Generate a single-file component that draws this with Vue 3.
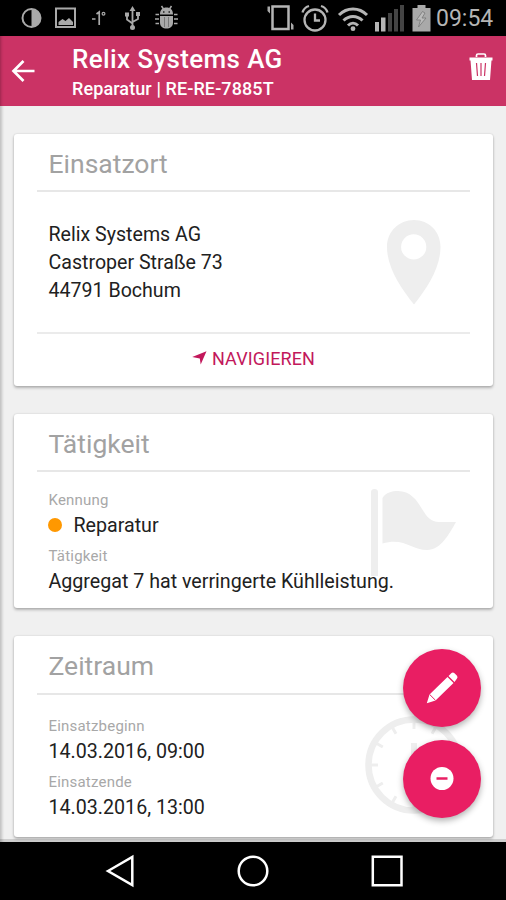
<script setup>
const address = ['Relix Systems AG', 'Castroper Straße 73', '44791 Bochum']
const period = [
  { label: 'Einsatzbeginn', value: '14.03.2016, 09:00' },
  { label: 'Einsatzende', value: '14.03.2016, 13:00' }
]
const ticks = Array.from({ length: 12 }, (_, i) => i * 30)
</script>

<template>
  <div class="screen">
    <div class="status">
      <svg class="status-icons" width="190" height="36" viewBox="0 0 190 36" fill="none" stroke="#a9a9a9">
        <circle cx="31.500" cy="18" r="9" stroke-width="2" />
        <path d="M31.500 9a9 9 0 0 1 0 18z" fill="#a9a9a9" stroke="none" />
        <path d="M56 8.500h19v18.500H56z" stroke-width="2" />
        <path d="M58.500 25v-3l4-3 3 2 3.500-3 4 4v3z" fill="#a9a9a9" stroke="none" />
        <path d="M92 19h3.500M96.500 14l2.700-2V25" stroke-width="1.700" />
        <circle cx="103.500" cy="13.800" r="1.400" stroke-width="1.200" />
        <g stroke-width="1.800">
          <path d="M132.500 10v17M127 15v4.500l5.500 4M138 14v5l-5.500 3" />
          <path d="M129.500 11l3-5 3 5zM125 12.500h4v4h-4zM136 12h4v4h-4z" fill="#a9a9a9" stroke="none" />
          <circle cx="132.500" cy="27.500" r="2.500" fill="#a9a9a9" stroke="none" />
        </g>
        <path d="M160 14.500h13c0-5-2.800-7-6.500-7s-6.500 2-6.500 7zM160 16h13v6.500c0 4-3 6-6.500 6s-6.500-2-6.500-6z" fill="#a9a9a9" stroke="none" />
        <path d="M161.500 6l2 3M171.500 6l-2 3M155.500 14.500h3.500M174 14.500h3.500M155 19h4M174 19h4M155.500 23.500h3.500M174 23.500h3.500" stroke-width="1.500" />
        <path d="M164.500 17v10M168.500 17v10" stroke="#777" stroke-width="1" />
        <path d="M163 12h1.500M168.500 12h1.500" stroke="#222" stroke-width="1.500" />
      </svg>
      <svg width="172" height="36" viewBox="0 0 172 36" fill="none" stroke="#b5b5b5">
        <path d="M6.500 6.500h16v22.500h-16z" stroke-width="2.500" />
        <path d="M4 6.500H1.500v4.500l2.500 2.500zM25 29.500h2.500V25L25 22.500z" fill="#a9a9a9" stroke="none" />
        <circle cx="49" cy="20" r="10.500" stroke-width="2.300" />
        <path d="M49 13.500V20.500h5M36.500 12.500c1-3.500 3-5.500 6.500-6.500M61.500 12.500c-1-3.500-3-5.500-6.500-6.500" stroke-width="2.300" />
        <path d="M73 15c8-8 20-8 28 0M77.500 20.500c5.500-5.500 13.500-5.500 19 0M82 25.500c3-3 7-3 10 0" stroke-width="3" />
        <circle cx="87" cy="28.700" r="2.400" fill="#b5b5b5" stroke="none" />
        <path d="M109 22h4v9.500h-4zM115 17.500h4.500v14H115z" fill="#b5b5b5" stroke="none" />
        <path d="M122 13h4v18.500h-4zM128 9h4v22.500h-4zM134 5h4v26.500h-4z" fill="#444" stroke="none" />
        <path d="M146.500 8h5V5h8v3h5v23.500h-18z" fill="#a9a9a9" stroke="none" />
        <path d="M156.500 11.500l-6 8.500h4l-2 7 7.500-9h-4l3-5z" fill="#bbb" stroke="#777" stroke-width=".8" />
      </svg>
      <span class="time">09:54</span>
    </div>

    <header class="bar">
      <svg class="back" width="26" height="26" viewBox="0 0 26 26" fill="none" stroke="#fff" stroke-width="2.700">
        <path d="M13.500 3L3.500 13l10 10M3 13h21.500" />
      </svg>
      <div class="heading">
        <div class="title"><span>Relix Systems AG</span></div>
        <div class="subtitle"><span>Reparatur | RE-RE-7885T</span></div>
      </div>
      <svg class="trash" width="24" height="28" viewBox="0 0 24 28">
        <path d="M7.500 4V2.500Q7.500 1 9 1h6q1.500 0 1.500 1.500V4" fill="none" stroke="#fff" stroke-width="1.700" />
        <path d="M.5 4.500h23v3H.5zM1.500 7h21L21 27H3z" fill="#fff" />
        <path d="M7.500 10l1 13M12 10v13M16.500 10l-1 13" stroke="#cb3365" stroke-width="1.200" />
      </svg>
    </header>

    <main class="content">
      <section class="card place">
        <h2>Einsatzort</h2>
        <div class="address">
          <p v-for="line in address" :key="line">{{ line }}</p>
          <svg class="pin" width="54" height="85" viewBox="0 0 54 85">
            <path fill="#eee" fill-rule="evenodd" d="M27 0C12 0 0 11.500 0 27c0 21 14 41 27 57.500C40 68 53.500 48 53.500 27 53.500 11.500 42 0 27 0zm-.3 14.300a12.600 12.600 0 1 1 0 25.200 12.600 12.600 0 0 1 0-25.200z" />
          </svg>
        </div>
        <div class="action">
          <svg width="15" height="14" viewBox="0 0 15 14"><path d="M14.500.3L8.700 13.500 7.800 7.400.2 6z" fill="#c2185b" /></svg>
          <span>NAVIGIEREN</span>
        </div>
      </section>

      <section class="card task">
        <h2>Tätigkeit</h2>
        <svg class="flag" width="86" height="90" viewBox="0 0 86 90" fill="#eee">
          <path d="M0 3Q0 0 3.500 0T7 3v84H0zM11.500 9C15 3.500 21 2 27 2c12 0 19 9 24 18 5 8 9 13 17 13h17C78 45 70 61 56 61c-15 0-23-13-44.500-6.500z" />
        </svg>
        <div class="fields">
          <div class="label">Kennung</div>
          <div class="value kind"><i></i>Reparatur</div>
          <div class="label">Tätigkeit</div>
          <div class="value">Aggregat 7 hat verringerte Kühlleistung.</div>
        </div>
      </section>

      <section class="card period">
        <h2>Zeitraum</h2>
        <svg class="clock" width="100" height="100" viewBox="0 0 100 100" fill="none" stroke="#eee">
          <circle cx="50" cy="50" r="45.500" stroke-width="6.500" />
          <path v-for="a in ticks" :key="a" d="M50 7v7" stroke-width="3" :transform="`rotate(${a} 50 50)`" />
          <path d="M50 28v24l14 10" stroke-width="6" />
        </svg>
        <div class="fields">
          <template v-for="item in period" :key="item.label">
            <div class="label">{{ item.label }}</div>
            <div class="value">{{ item.value }}</div>
          </template>
        </div>
      </section>

      <div class="fabs">
        <button class="fab" aria-label="Bearbeiten">
          <svg width="32" height="32" viewBox="0 0 32 32">
            <path d="M.8 31.200l2.700-8.700L21.500 5l6 6L9.500 28.500zM22.500 4l3-3q1.500-1 3 .3l2.500 2.500q1 1.500 0 2.800l-2.500 3.400z" fill="#fff" />
            <path d="M3.700 22.500l5.800 5.800" stroke="#e91e63" stroke-width="1" />
          </svg>
        </button>
        <button class="fab" aria-label="Entfernen">
          <svg width="24" height="24" viewBox="0 0 24 24">
            <circle cx="12" cy="11.500" r="11.500" fill="#fff" />
            <path d="M6.500 11.500h11" stroke="#e91e63" stroke-width="2.500" />
          </svg>
        </button>
      </div>
    </main>

    <nav class="nav">
      <svg width="506" height="58" viewBox="0 0 506 58" fill="none" stroke="#fff" stroke-width="2.500">
        <path d="M108 29l24.300-14v28z" />
        <circle cx="253" cy="29" r="14.300" />
        <path d="M372.800 14.800h28.700v28.500h-28.700z" />
      </svg>
    </nav>
  </div>
</template>

<style>
body { margin: 0; background: #000; }
</style>

<style scoped>
.screen { width: 506px; height: 900px; overflow: hidden; display: flex; flex-direction: column; font-family: Roboto, sans-serif; background: #000; }
.status { height: 36px; display: flex; align-items: center; background: #000; flex: none; }
.status svg { flex: none; }
.status-icons { margin-right: 76px; }
.status svg + svg { margin-right: -2px; }
.time { font-size: 23px; line-height: 36px; color: #b5b5b5; white-space: nowrap; padding-top: 2px; }
.bar { height: 70px; flex: none; display: flex; background: #cb3365; color: #fff; box-sizing: border-box; box-shadow: inset 3px 0 3px -2px rgba(0, 0, 0, .25); }
.back { margin: 22px 0 0 10px; }
.heading { margin-left: 36px; width: 397px; white-space: nowrap; }
.title { font-size: 26px; letter-spacing: .37px; font-weight: 500; line-height: 30px; margin-top: 8px; }
.subtitle { font-size: 18px; letter-spacing: .1px; font-weight: 500; line-height: 22px; margin-top: 4px; }
.trash { margin-top: 17px; }
.content { position: relative; height: 736px; flex: none; box-sizing: border-box; padding: 28px 13px 0 14px; display: flex; flex-direction: column; gap: 28px; overflow: hidden; background: #f0f0f0; box-shadow: inset 4px 0 3px -2px rgba(0, 0, 0, .2), inset 0 -3px 0 #cfcfcf; }
.card { position: relative; flex: none; box-sizing: border-box; padding: 0 23px; background: #fff; border-radius: 3px; box-shadow: 0 2px 3px rgba(0, 0, 0, .25), 0 0 2px rgba(0, 0, 0, .16); }
.place { height: 252px; }
.task { height: 194px; }
.period { height: 201px; }
h2 { margin: 0; height: 56px; padding: 0 0 0 11.500px; line-height: 60px; font-size: 26.500px; font-weight: 400; color: #a2a2a2; border-bottom: 2px solid #e7e7e7; }
.period h2 { height: 57px; }
.address { position: relative; height: 142px; box-sizing: border-box; padding: 29px 0 0 11.500px; border-bottom: 2px solid #ebebeb; }
.address p { margin: 0; font-size: 19.600px; line-height: 28px; color: #212121; }
.pin { position: absolute; left: 350px; top: 28px; }
.action { height: 48px; display: flex; align-items: center; justify-content: center; gap: 5px; color: #c2185b; font-size: 18px; letter-spacing: .12px; }
.flag { position: absolute; left: 357px; top: 75px; }
.clock { position: absolute; left: 350px; top: 79px; }
.fields { position: relative; padding: 16px 0 0 11.500px; }
.period .fields { padding-top: 19px; }
.label { font-size: 15px; letter-spacing: .2px; line-height: 24px; color: #a8a8a8; }
.value { font-size: 19.650px; line-height: 27px; height: 32px; box-sizing: border-box; color: #212121; white-space: nowrap; }
.kind { display: flex; align-items: flex-start; }
.kind i { width: 14px; height: 14px; border-radius: 50%; background: #ff9800; margin: 6px 12px 0 -1px; }
.fabs { position: absolute; left: 403px; top: 543px; display: flex; flex-direction: column; gap: 13px; }
.fab { width: 78px; height: 78px; border: 0; padding: 0; border-radius: 50%; background: #e91e63; display: flex; align-items: center; justify-content: center; box-shadow: 0 3px 6px rgba(0, 0, 0, .3); }
.nav { height: 58px; flex: none; background: #000; }
</style>
